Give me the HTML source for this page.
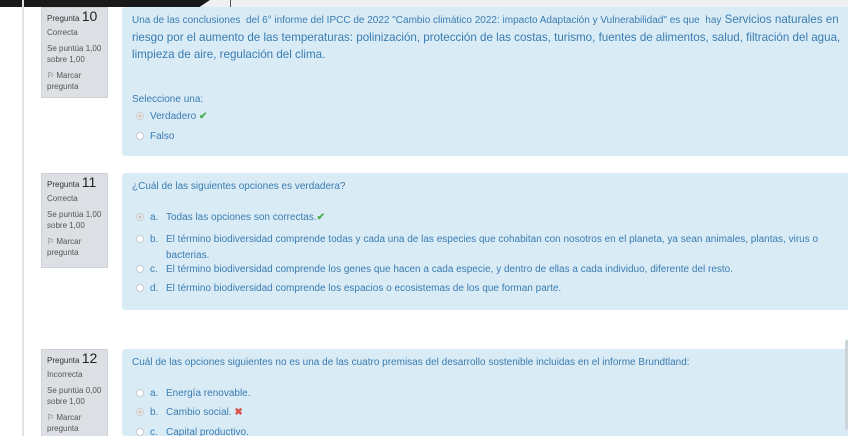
<!DOCTYPE html>
<html><head><meta charset="utf-8"><style>
html,body{margin:0;width:848px;height:436px;overflow:hidden;}
body{background:#fff;font-family:"Liberation Sans",sans-serif;position:relative;}
.topbar{position:absolute;left:0;top:0;width:848px;height:7px;background:#f0f0f0;}
.blk{position:absolute;left:0;top:0;width:210px;height:7px;background:#1a1a1a;clip-path:polygon(0 0,100% 0,95% 100%,0 100%);}
.vl{position:absolute;left:22px;top:0;width:2px;height:436px;background:#e3e3e3;}
.info{position:absolute;left:41px;width:67px;background:#dcdfe3;border:1px solid #d0d3d6;box-sizing:border-box;padding:3px 5px;font-size:8px;color:#555;line-height:11px;}
.info .t{font-size:8px;color:#333;}
.info .t b{font-size:14px;font-weight:normal;color:#222;}
.info p{margin:3px 0 5px;}
.q{position:absolute;left:122px;width:726px;background:#d9ecf6;border-radius:3px 0 0 3px;color:#3a7bb0;font-size:10px;box-sizing:border-box;padding:0 10px;}
.opt{position:absolute;left:14px;font-size:10px;color:#3a7bb0;white-space:nowrap;}
.rd{display:inline-block;width:8px;height:8px;border-radius:50%;border:1px solid #c8ccd0;background:#fff;vertical-align:-1px;margin-right:6px;box-sizing:border-box;}
.rd.on{background:radial-gradient(#c4c4c4 35%,#f2f2f2 45%);}
.l{display:inline-block;width:16px;}
.ck{color:#4cae4c;font-weight:bold;}
.x{color:#d9534f;font-weight:bold;}
</style></head><body>
<div class="topbar"></div><div class="blk"></div>
<div style="position:absolute;left:230px;top:0;width:1px;height:7px;background:#555"></div>
<div class="vl"></div>

<div class="info" style="top:7px;height:91px"><div class="t">Pregunta <b>10</b></div><p>Correcta</p><p>Se puntúa 1,00 sobre 1,00</p><p>⚐ Marcar pregunta</p></div>
<div class="q" style="top:7px;height:149px">
<div style="position:absolute;left:10px;top:4px;width:712px;line-height:17px;font-size:11.6px"><span style="font-size:10px">Una de las conclusiones&nbsp; del 6° informe del IPCC de 2022 "Cambio climático 2022: impacto Adaptación y Vulnerabilidad" es que&nbsp; hay</span> Servicios naturales en riesgo por el aumento de las temperaturas: polinización, protección de las costas, turismo, fuentes de alimentos, salud, filtración del agua, limpieza de aire, regulación del clima.</div>
<div class="opt" style="left:10px;top:87px">Seleccione una:</div>
<div class="opt" style="top:104px"><span class="rd on"></span>Verdadero <span class="ck">✔</span></div>
<div class="opt" style="top:124px"><span class="rd"></span>Falso</div>
</div>

<div class="info" style="top:173px;height:95px"><div class="t">Pregunta <b>11</b></div><p>Correcta</p><p>Se puntúa 1,00 sobre 1,00</p><p>⚐ Marcar pregunta</p></div>
<div class="q" style="top:173px;height:137px">
<div class="opt" style="left:10px;top:8px">¿Cuál de las siguientes opciones es verdadera?</div>
<div class="opt" style="top:39px"><span class="rd on"></span><span class="l">a.</span>Todas las opciones son correctas.<span class="ck">✔</span></div>
<div class="opt" style="top:59px;line-height:16px"><span class="rd"></span><span class="l">b.</span>El término biodiversidad comprende todas y cada una de las especies que cohabitan con nosotros en el planeta, ya sean animales, plantas, virus o<br><span style="margin-left:30px">bacterias.</span></div>
<div class="opt" style="top:91px"><span class="rd"></span><span class="l">c.</span>El término biodiversidad comprende los genes que hacen a cada especie, y dentro de ellas a cada individuo, diferente del resto.</div>
<div class="opt" style="top:110px"><span class="rd"></span><span class="l">d.</span>El término biodiversidad comprende los espacios o ecosistemas de los que forman parte.</div>
</div>

<div class="info" style="top:349px;height:90px"><div class="t">Pregunta <b>12</b></div><p>Incorrecta</p><p>Se puntúa 0,00 sobre 1,00</p><p>⚐ Marcar pregunta</p></div>
<div class="q" style="top:349px;height:87px">
<div class="opt" style="left:10px;top:8px">Cuál de las opciones siguientes no es una de las cuatro premisas del desarrollo sostenible incluidas en el informe Brundtland:</div>
<div class="opt" style="top:39px"><span class="rd"></span><span class="l">a.</span>Energía renovable.</div>
<div class="opt" style="top:58px"><span class="rd on"></span><span class="l">b.</span>Cambio social. <span class="x">✖</span></div>
<div class="opt" style="top:78px"><span class="rd"></span><span class="l">c.</span>Capital productivo.</div>
</div>
<div style="position:absolute;left:845px;top:340px;width:3px;height:90px;background:#c9d3da;border-radius:2px 0 0 2px"></div>
</body></html>
